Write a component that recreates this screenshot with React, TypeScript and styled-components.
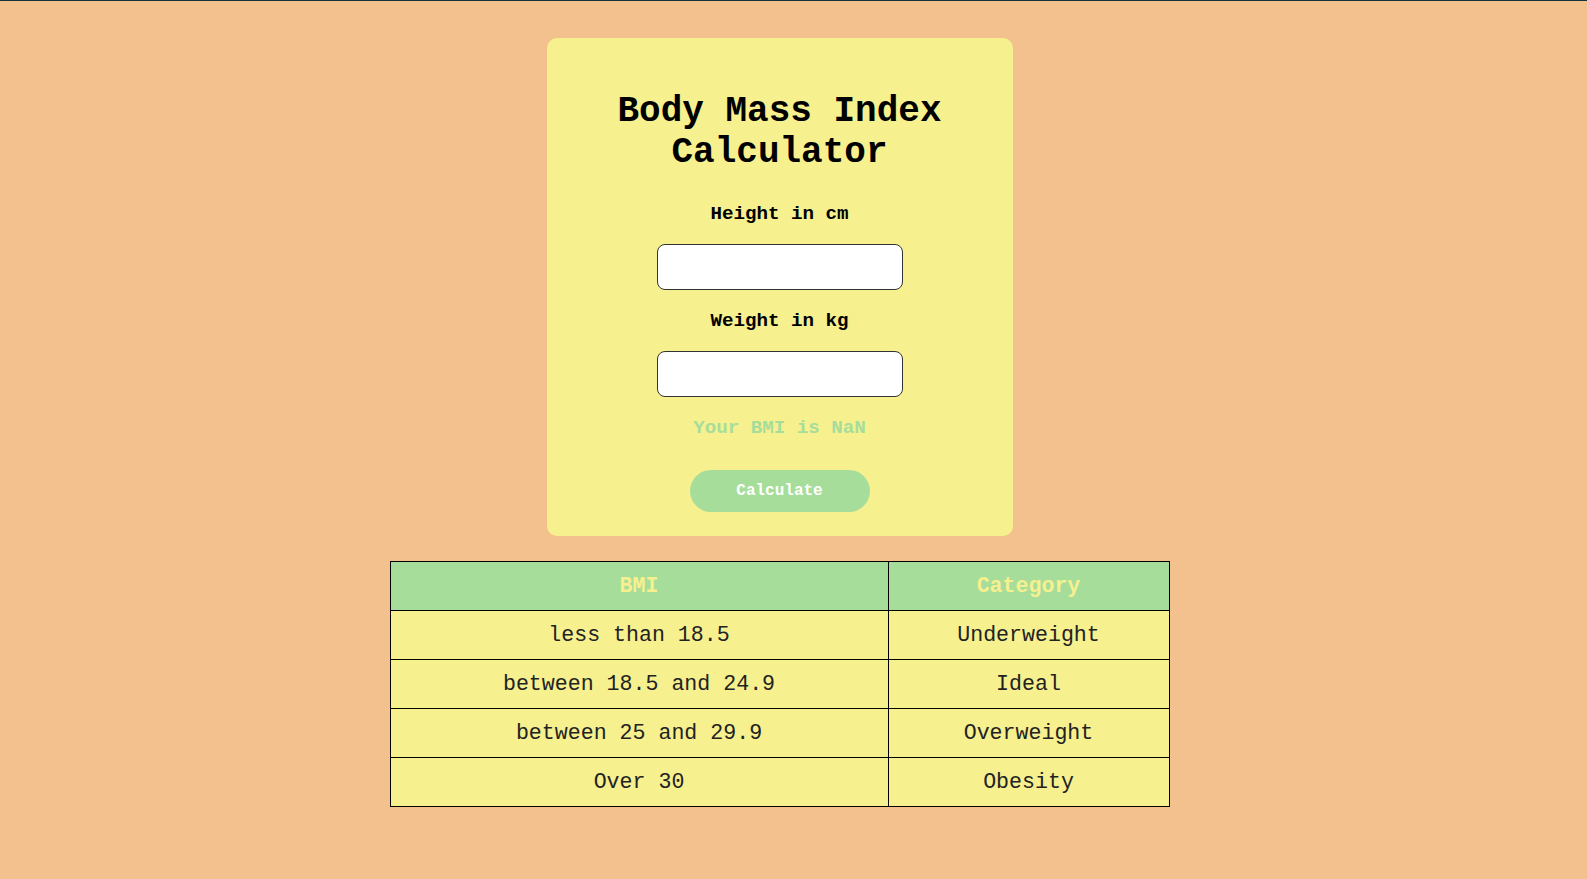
import React, { useState } from "react";
import styled, { createGlobalStyle } from "styled-components";

const GlobalStyle = createGlobalStyle`
  html, body {
    margin: 0;
    padding: 0;
    background: #f2c18d;
  }
  body {
    font-family: "Liberation Mono", "Courier New", monospace;
  }
`;

const Page = styled.div`
  min-height: 100vh;
  box-sizing: border-box;
  border-top: 1px solid #12323c;
  padding: 37px 28px 0 0;
  display: flex;
  flex-direction: column;
  align-items: center;
`;

const Card = styled.div`
  width: 466px;
  box-sizing: border-box;
  background: #f6f08f;
  border-radius: 10px;
  padding: 54px 30px 24px;
  display: flex;
  flex-direction: column;
  align-items: center;
`;

const Title = styled.h1`
  margin: 0 0 29px;
  font-size: 36px;
  font-weight: bold;
  line-height: 40.8px;
  text-align: center;
  color: #000;
`;

const Label = styled.label`
  font-size: 19.2px;
  font-weight: bold;
  line-height: 22px;
  color: #000;
  margin-bottom: 19px;
`;

const Input = styled.input`
  width: 246px;
  height: 46px;
  box-sizing: border-box;
  border: 1px solid #333;
  border-radius: 8px;
  background: #fff;
  margin-bottom: 20px;
  font-family: inherit;
  font-size: 16px;
  padding: 0 10px;
  outline: none;
`;

const Result = styled.p`
  margin: 0 0 31px;
  font-size: 19.2px;
  font-weight: bold;
  line-height: 22px;
  color: #a6dd9b;
`;

const Button = styled.button`
  width: 180px;
  height: 42px;
  border: none;
  border-radius: 21px;
  background: #a6dd9b;
  color: #fff;
  font-family: "Liberation Mono", "Courier New", monospace;
  font-weight: bold;
  font-size: 16px;
  cursor: pointer;
`;

const Table = styled.table`
  margin-top: 25px;
  width: 780px;
  border-collapse: collapse;
  font-family: "Liberation Mono", "Courier New", monospace;
  font-size: 21.6px;
`;

const Th = styled.th<{ $w?: number }>`
  width: ${(p) => (p.$w ? `${p.$w}px` : "auto")};
  height: 48px;
  border: 1px solid #000;
  background: #a6dd9b;
  color: #f6f08f;
  font-weight: bold;
  text-align: center;
  padding: 0;
`;

const Td = styled.td`
  height: 48px;
  border: 1px solid #000;
  background: #f6f08f;
  color: #222;
  text-align: center;
  padding: 0;
`;

const rows = [
  ["less than 18.5", "Underweight"],
  ["between 18.5 and 24.9", "Ideal"],
  ["between 25 and 29.9", "Overweight"],
  ["Over 30", "Obesity"],
];

export default function App() {
  const [height, setHeight] = useState("");
  const [weight, setWeight] = useState("");
  const [bmi, setBmi] = useState<number>(NaN);

  const calc = () => {
    const h = parseFloat(height) / 100;
    const w = parseFloat(weight);
    setBmi(w / (h * h));
  };

  return (
    <>
      <GlobalStyle />
      <Page>
        <Card>
          <Title>Body Mass Index Calculator</Title>
          <Label htmlFor="h">Height in cm</Label>
          <Input id="h" value={height} onChange={(e) => setHeight(e.target.value)} />
          <Label htmlFor="w">Weight in kg</Label>
          <Input id="w" value={weight} onChange={(e) => setWeight(e.target.value)} />
          <Result>Your BMI is {isNaN(bmi) ? "NaN" : bmi.toFixed(1)}</Result>
          <Button onClick={calc}>Calculate</Button>
        </Card>
        <Table>
          <thead>
            <tr>
              <Th $w={497}>BMI</Th>
              <Th>Category</Th>
            </tr>
          </thead>
          <tbody>
            {rows.map(([a, b]) => (
              <tr key={a}>
                <Td>{a}</Td>
                <Td>{b}</Td>
              </tr>
            ))}
          </tbody>
        </Table>
      </Page>
    </>
  );
}
